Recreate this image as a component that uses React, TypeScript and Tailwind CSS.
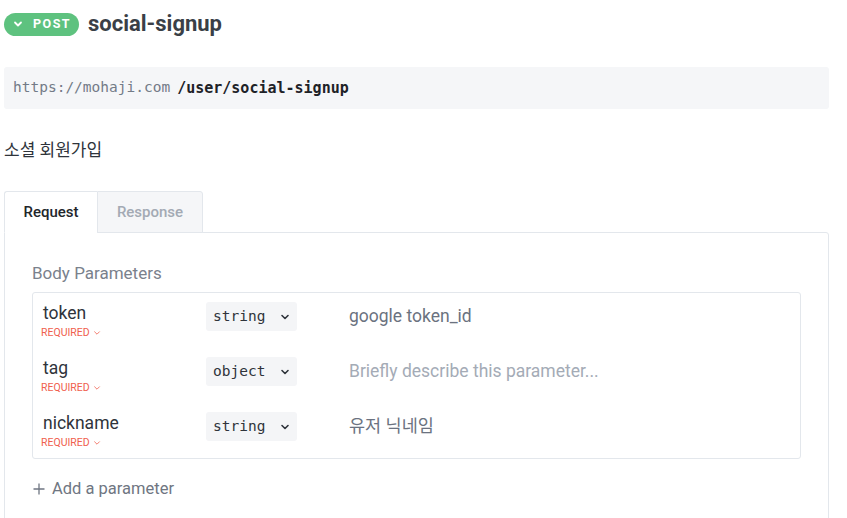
import React from 'react';

const sans = "font-['Roboto','Noto_Sans_CJK_KR',sans-serif]";
const mono = "font-['DejaVu_Sans_Mono',monospace]";

interface Param {
  name: string;
  type: string;
  description: string;
  placeholder?: boolean;
}

const params: Param[] = [
  { name: 'token', type: 'string', description: 'google token_id' },
  { name: 'tag', type: 'object', description: 'Briefly describe this parameter...', placeholder: true },
  { name: 'nickname', type: 'string', description: '유저 닉네임' },
];

const Chevron = ({ className, size = 10, stroke = 2 }: { className?: string; size?: number; stroke?: number }) => (
  <svg width={size} height={size} viewBox="0 0 10 10" className={className} fill="none">
    <path d="M2 3.5 5 6.5 8 3.5" stroke="currentColor" strokeWidth={stroke} strokeLinecap="round" strokeLinejoin="round" />
  </svg>
);

const ParamRow: React.FC<{ param: Param }> = ({ param }) => (
  <div className="flex items-start h-[55px] pt-[9px] pl-[10px]">
    <div className="w-[163px] mt-[1px]">
      <div className="text-[17.5px] leading-[20px] text-[#2f343b]">{param.name}</div>
      <div className="flex items-center gap-[3px] mt-[4px] -ml-[2px] text-[10.5px] leading-[12px] text-[#f0604e]">
        REQUIRED
        <Chevron size={8} stroke={1} />
      </div>
    </div>
    <div className={`${mono} flex items-center justify-between w-[91px] h-[29px] rounded-[3px] bg-[#f4f5f7] pl-[7px] pr-[7px] text-[14.5px] text-[#2f343b]`}>
      {param.type}
      <Chevron size={10} stroke={1.6} />
    </div>
    <div
      className={`ml-[52px] text-[17.5px] leading-[29px] ${param.placeholder ? 'text-[#a4abb6]' : 'text-[#6b7280]'}`}
    >
      {param.description}
    </div>
  </div>
);

export default function App() {
  return (
    <div className={`${sans} w-[825px] ml-1 bg-white text-[#2f343b]`}>
      <div className="flex items-center h-[48px] gap-[9px]">
        <div className="flex items-center h-[23px] w-[75px] rounded-full bg-[#5ec27f] pl-[9px] text-white">
          <Chevron size={10} stroke={1.8} />
          <span className="ml-[10px] text-[12.5px] font-bold tracking-[0.12em]">POST</span>
        </div>
        <h1 className="text-[22px] font-bold text-[#3a3f47] leading-none">social-signup</h1>
      </div>

      <div className={`${mono} mt-[19px] h-[42px] flex items-center pl-[9px] rounded-[3px] bg-[#f5f6f8] text-[14.5px]`}>
        <span className="text-[#737b87]">https://mohaji.com</span>
        <span className="ml-[7px] text-[15px] font-bold text-[#1e2227]">/user/social-signup</span>
      </div>

      <div className="mt-[30px] text-[17px] leading-[22px] text-[#2f343b]">소셜 회원가입</div>

      <div className="mt-[30px] flex relative z-10 -mb-px">
        <div className="h-[42px] w-[93px] flex items-center justify-center bg-white border border-[#e3e7ec] border-b-white border-r-0 rounded-tl-[3px] text-[15px] font-medium text-[#22262b]">
          Request
        </div>
        <div className="h-[42px] w-[106px] flex items-center justify-center bg-[#f5f6f8] border border-[#e3e7ec] rounded-tr-[3px] text-[15px] font-medium text-[#a3aab4]">
          Response
        </div>
      </div>

      <div className="border border-[#e3e7ec] rounded-b-[3px] rounded-tr-[3px] px-[27px] pt-[29px] pb-[20px]">
        <div className="text-[17px] leading-[22px] text-[#7a818c]">Body Parameters</div>
        <div className="mt-[8px] border border-[#e3e7ec] rounded-[3px]">
          {params.map((p) => (
            <ParamRow key={p.name} param={p} />
          ))}
        </div>
        <div className="mt-[19px] flex items-center text-[16.5px] leading-[22px] text-[#6f7682]">
          <svg width="14" height="14" viewBox="0 0 14 14" className="mr-[6px]" fill="none">
            <path d="M7 1.5v11M1.5 7h11" stroke="currentColor" strokeWidth="1.3" />
          </svg>
          Add a parameter
        </div>
      </div>
    </div>
  );
}
